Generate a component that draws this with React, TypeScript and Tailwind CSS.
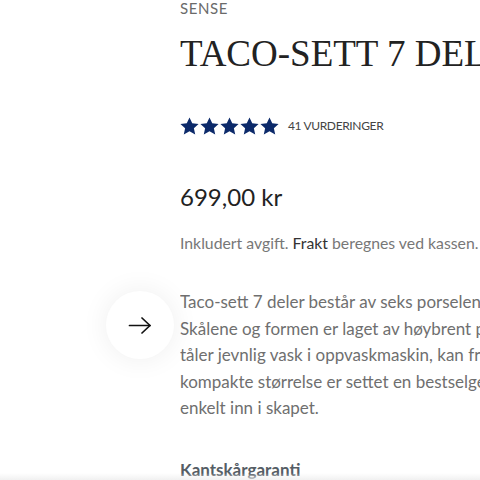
const LINES = [
  'Taco-sett 7 deler består av seks porselensskåler og en form.',
  'Skålene og formen er laget av høybrent porselen som',
  'tåler jevnlig vask i oppvaskmaskin, kan fryses og tåler ovn. Med sin',
  'kompakte størrelse er settet en bestselger som passer',
  'enkelt inn i skapet.',
];

function Star() {
  return (
    <svg width="19" height="18" viewBox="0 0 24 23" className="shrink-0">
      <path d="M12 0.5l3.5 7.4 8.1 0.9-6 5.5 1.7 8L12 18.2 4.7 22.3l1.7-8-6-5.5 8.1-0.9z" fill="#0c2a6a" />
    </svg>
  );
}

export default function App() {
  return (
    <div className="relative w-[480px] h-[480px] overflow-hidden bg-white flex" style={{ fontFamily: 'Lato, "Open Sans", sans-serif' }}>
      {/* gallery side */}
      <div className="w-[180px] shrink-0 relative">
        <button className="absolute left-[106px] top-[291px] w-[68px] h-[68px] rounded-full bg-white flex items-center justify-center shadow-[0_0_28px_rgba(0,0,0,0.07)]">
          <svg width="24" height="17" viewBox="0 0 24 17" fill="none" stroke="#111" strokeWidth="1.7" strokeLinecap="round" strokeLinejoin="round">
            <path d="M1.5 8.5h20.5" />
            <path d="M14 1l8 7.5-8 7.5" />
          </svg>
        </button>
      </div>

      {/* product info */}
      <div className="flex-1 min-w-0 overflow-hidden whitespace-nowrap">
        <div className="text-[15px] leading-[16px] tracking-[0.04em] text-[#6a6a6a]">SENSE</div>
        <h1 className="mt-[16px] text-[37px] leading-[44px] text-[#222]" style={{ fontFamily: '"Liberation Serif", serif' }}>
          TACO-SETT 7 DELER
        </h1>

        <div className="mt-[41px] flex items-center">
          <div className="flex gap-[1px]">
            <Star /><Star /><Star /><Star /><Star />
          </div>
          <span className="ml-[9px] text-[12px] tracking-[-0.03em] text-[#444]">41 VURDERINGER</span>
        </div>

        <div className="mt-[48px] text-[24px] leading-[28px] text-[#222]">699,00 kr</div>

        <div className="mt-[22px] text-[15.8px] leading-[20px] text-[#777]">
          Inkludert avgift. <span className="text-[#333]">Frakt</span> beregnes ved kassen.
        </div>

        <div className="mt-[36px] text-[17px] leading-[26.5px] text-[#6f6f6f]">
          {LINES.map(l => (
            <div key={l}>{l}</div>
          ))}
        </div>

        <div className="mt-[38px] text-[17px] leading-[20px] font-bold text-[#555d65]">Kantskårgaranti</div>
      </div>

      <div className="absolute left-0 right-0 bottom-0 h-[7px] bg-gradient-to-b from-white/0 to-[#ededed]/80" />
    </div>
  );
}
